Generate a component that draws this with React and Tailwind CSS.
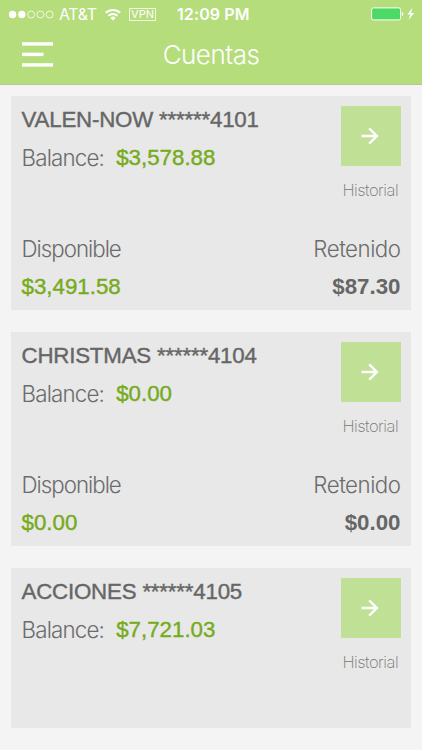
import React from 'react';

const accounts = [
  { name: 'VALEN-NOW', number: '******4101', balance: '$3,578.88', available: '$3,491.58', held: '$87.30' },
  { name: 'CHRISTMAS', number: '******4104', balance: '$0.00', available: '$0.00', held: '$0.00' },
  { name: 'ACCIONES', number: '******4105', balance: '$7,721.03' },
];

function StatusBar() {
  return (
    <div className="flex h-7 items-center pl-[9px] pr-[7px] text-white">
      <svg className="h-[9px] w-[45px]" viewBox="0 0 45 9" fill="none" stroke="white" strokeWidth="0.8">
        <circle cx="3.6" cy="4.5" r="3.4" fill="white" />
        <circle cx="12.8" cy="4.5" r="3.4" fill="white" />
        <circle cx="22.1" cy="4.5" r="3.5" />
        <circle cx="31.4" cy="4.5" r="3.5" />
        <circle cx="40.6" cy="4.5" r="3.5" />
      </svg>
      <span className="ml-[5px] w-[39px] whitespace-nowrap font-['Inter'] text-[16px] tracking-[-0.4px]">AT&amp;T</span>
      <svg className="ml-[7px] h-[13px] w-[16px]" viewBox="0 0 16 13" fill="none" stroke="white" strokeWidth="2">
        <path d="M0.8 4.9a10.2 10.2 0 0 1 14.4 0" />
        <path d="M3.5 7.8a6.4 6.4 0 0 1 9 0" />
        <path d="M8 12.6 5.4 9.9a3.7 3.7 0 0 1 5.2 0z" fill="white" stroke="none" />
      </svg>
      <span className="ml-[8px] flex h-[13px] w-[27px] items-center justify-center border border-white/80 font-['Inter'] text-[11px] leading-none">VPN</span>
      <span className="ml-[21px] whitespace-nowrap font-['Inter'] text-[16px] font-semibold tracking-[0.1px]">12:09 PM</span>
      <svg className="ml-auto h-[14px] w-[44px]" viewBox="0 0 44 14">
        <rect x="0.6" y="0.9" width="29" height="12" rx="1.8" fill="#4cd964" stroke="white" strokeWidth="1" />
        <path d="M30.8 5c2 .4 2 3.6 0 4z" fill="white" />
        <path d="M41.5 1 36.3 7.6h3L37.6 13l5.6-6.9h-3.2z" fill="white" />
      </svg>
    </div>
  );
}

function Header() {
  return (
    <header className="h-[85px] border-b border-[#b5c796] bg-[#b5dd7b]">
      <StatusBar />
      <div className="grid h-[54px] grid-cols-[1fr_auto_1fr] items-center px-[22px]">
        <button type="button" className="w-8" aria-label="Menu">
          <svg className="h-[26px] w-[31px]" viewBox="0 0 31 26" fill="white">
            <rect y="0.2" width="31" height="3.4" />
            <rect y="10.7" width="21.5" height="3.4" />
            <rect y="21.2" width="31" height="3.4" />
          </svg>
        </button>
        <h1 className="font-['Inter'] text-[26px] font-light leading-none tracking-[-0.5px] text-white">Cuentas</h1>
      </div>
    </header>
  );
}

function AccountCard({ account }) {
  return (
    <section className={`${account.held ? 'h-[214.5px]' : 'h-[160.5px]'} flex flex-col bg-[#e8e8e8] px-[10.5px] pt-[5.5px] text-[22.3px] leading-[37.5px] text-[#666]`}>
      <div className="flex h-[129px] justify-between">
        <div className="whitespace-nowrap">
          <h2 className="tracking-[-0.2px] [-webkit-text-stroke:0.4px_#666]">
            {account.name} {account.number}
          </h2>
          <p className="flex">
            <span className="w-[94.7px] font-['Inter'] font-light tracking-[-0.8px] text-[#6c6c6c]">Balance:</span>
            <span className="text-[#76ab1c] [-webkit-text-stroke:0.4px_#76ab1c]">{account.balance}</span>
          </p>
        </div>
        <div className="flex w-[59.5px] flex-col items-center pt-[5px]">
          <button type="button" className="flex h-[59.5px] w-full shrink-0 items-center justify-center bg-[#c0e096] pr-[2px]" aria-label="Historial">
            <svg className="h-[18px] w-[18px]" viewBox="0 0 18 18" fill="none" stroke="white" strokeWidth="2.4">
              <path d="M0.5 9h15M8.2 1.3 15.9 9l-7.7 7.7" />
            </svg>
          </button>
          <span className="mt-[11.2px] pr-[1px] font-['Inter'] text-[16.5px] font-extralight leading-[27px] tracking-[-0.5px] text-[#777]">Historial</span>
        </div>
      </div>
      {account.held && (
        <div className="flex justify-between">
          <div>
            <p className="font-['Inter'] font-light tracking-[-1px] text-[#6c6c6c]">Disponible</p>
            <p className="text-[#76ab1c] [-webkit-text-stroke:0.4px_#76ab1c]">{account.available}</p>
          </div>
          <div className="text-right">
            <p className="font-['Inter'] font-light tracking-[-0.5px] text-[#6c6c6c]">Retenido</p>
            <p className="font-bold">{account.held}</p>
          </div>
        </div>
      )}
    </section>
  );
}

function App() {
  return (
    <div className="h-[750px] overflow-hidden bg-[#f4f4f4] font-['Liberation_Sans',sans-serif] antialiased">
      <Header />
      <main className="flex flex-col gap-[21.5px] px-[11px] pt-[10.5px]">
        {accounts.map((account) => (
          <AccountCard key={account.number} account={account} />
        ))}
      </main>
    </div>
  );
}

export default App;
